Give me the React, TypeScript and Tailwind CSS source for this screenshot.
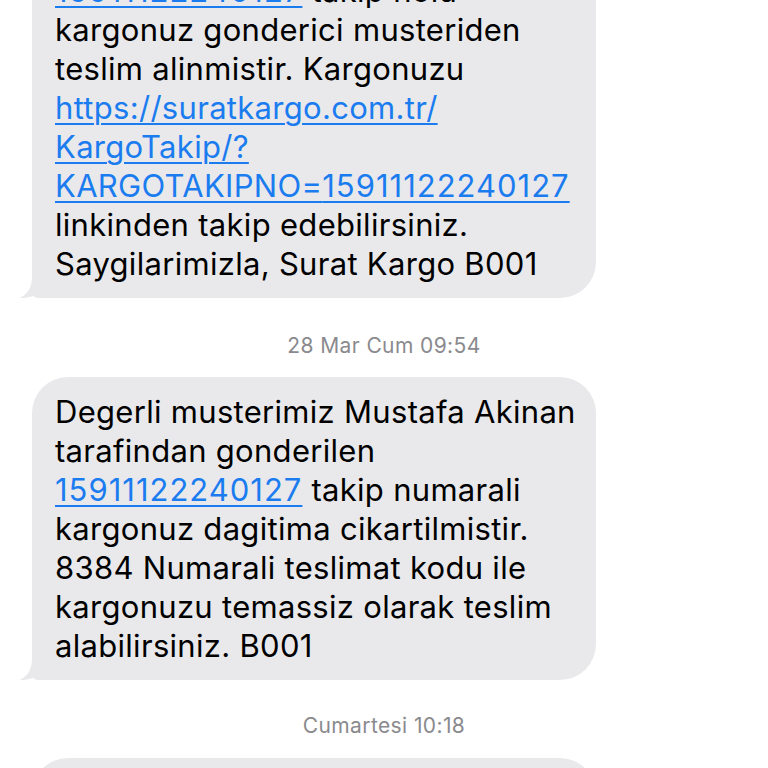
import React from 'react'

const font = { fontFamily: 'Inter, "Noto Sans", sans-serif' }

function Link({ children }: { children: React.ReactNode }) {
  return (
    <span className="text-[#1b7cf0] underline decoration-[1.5px] underline-offset-[4px]">{children}</span>
  )
}

// digits in the reference font run a touch wider than Inter's
function Num({ children }: { children: React.ReactNode }) {
  return <span className="tracking-[1px]">{children}</span>
}

function Bubble({ lines }: { lines: React.ReactNode[] }) {
  return (
    <div className="relative ml-[32px] w-[564px]">
      <div className="rounded-[36px] rounded-bl-[6px] bg-[#e9e9eb] px-[23px] py-[15px] text-[31px] leading-[39px] tracking-[0.3px] text-black">
        {lines.map((line, i) => (
          <div key={i} className="whitespace-nowrap">
            {line}
          </div>
        ))}
      </div>
      {/* tail */}
      <svg className="absolute bottom-0 left-[-12px]" width="26" height="22" viewBox="0 0 26 22">
        <path d="M12 0 C12 10 9 17 0 22 C8 22 14 20 18 17 C21 19 24 21 26 22 L26 0 Z" fill="#e9e9eb" />
      </svg>
    </div>
  )
}

function Stamp({ children }: { children: React.ReactNode }) {
  return (
    <div className="text-center text-[21px] leading-[24px] tracking-[0.4px] text-[#8a8a8e]">{children}</div>
  )
}

export default function App() {
  return (
    <div className="h-[768px] w-[768px] overflow-hidden bg-white" style={font}>
      <div className="-mt-[44px] flex flex-col">
        <Bubble
          lines={[
            <>
              <Link><Num>15911122240127</Num></Link> takip nolu
            </>,
            'kargonuz gonderici musteriden',
            'teslim alinmistir. Kargonuzu',
            <Link>https://suratkargo.com.tr/</Link>,
            <Link>KargoTakip/?</Link>,
            <Link>
              KARGOTAKIPNO=<Num>15911122240127</Num>
            </Link>,
            'linkinden takip edebilirsiniz.',
            'Saygilarimizla, Surat Kargo B001',
          ]}
        />

        <div className="mt-[36px] mb-[19px]">
          <Stamp>28 Mar Cum 09:54</Stamp>
        </div>

        <Bubble
          lines={[
            'Degerli musterimiz Mustafa Akinan',
            'tarafindan gonderilen',
            <>
              <Link><Num>15911122240127</Num></Link> takip numarali
            </>,
            'kargonuz dagitima cikartilmistir.',
            '8384 Numarali teslimat kodu ile',
            'kargonuzu temassiz olarak teslim',
            'alabilirsiniz. B001',
          ]}
        />

        <div className="mt-[34px] mb-[20px]">
          <Stamp>Cumartesi 10:18</Stamp>
        </div>

        <div className="ml-[32px] h-[120px] w-[564px] rounded-[36px] bg-[#e9e9eb]" />
      </div>
    </div>
  )
}
